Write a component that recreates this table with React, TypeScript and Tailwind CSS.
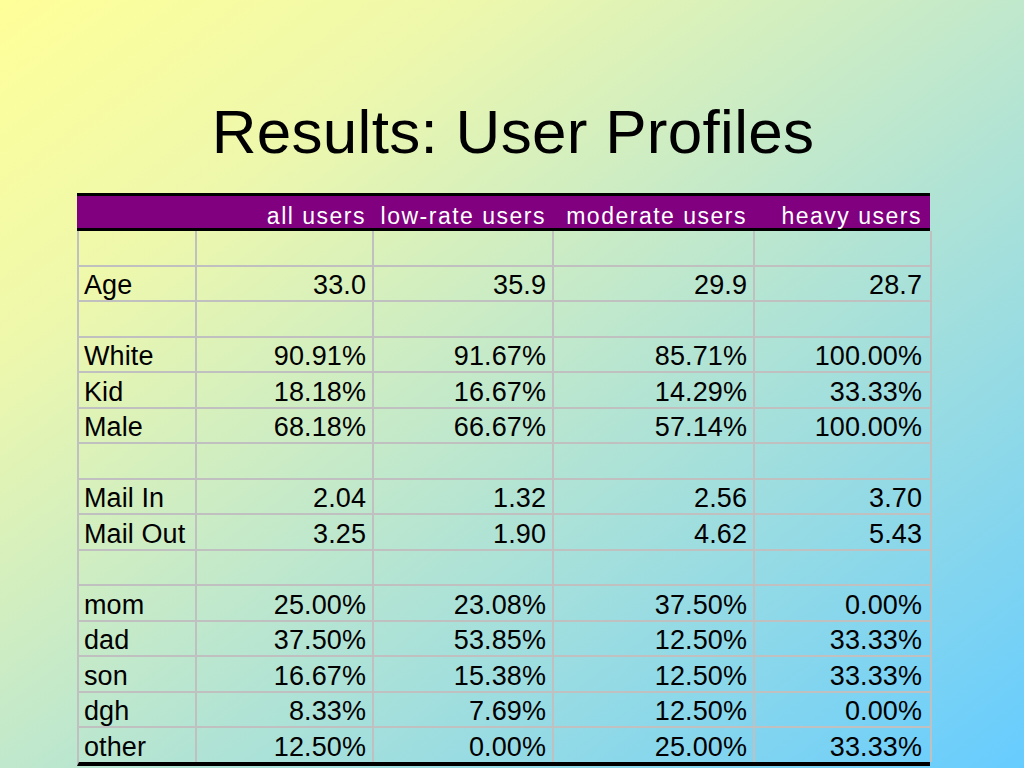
import React from 'react';

const headers = ['', 'all users', 'low-rate users', 'moderate users', 'heavy users'];

// null = spacer row
const rows: (string[] | null)[] = [
  null,
  ['Age', '33.0', '35.9', '29.9', '28.7'],
  null,
  ['White', '90.91%', '91.67%', '85.71%', '100.00%'],
  ['Kid', '18.18%', '16.67%', '14.29%', '33.33%'],
  ['Male', '68.18%', '66.67%', '57.14%', '100.00%'],
  null,
  ['Mail In', '2.04', '1.32', '2.56', '3.70'],
  ['Mail Out', '3.25', '1.90', '4.62', '5.43'],
  null,
  ['mom', '25.00%', '23.08%', '37.50%', '0.00%'],
  ['dad', '37.50%', '53.85%', '12.50%', '33.33%'],
  ['son', '16.67%', '15.38%', '12.50%', '33.33%'],
  ['dgh', '8.33%', '7.69%', '12.50%', '0.00%'],
  ['other', '12.50%', '0.00%', '25.00%', '33.33%'],
];

const cols = 'grid grid-cols-[118px_177px_180px_201px_177px]';

const App: React.FC = () => {
  return (
    <div
      className="w-[1024px] h-[768px] overflow-hidden flex flex-col bg-[linear-gradient(to_bottom_right,#ffff99_0%,#eef8ac_23%,#c0e8cc_50%,#66ccff_100%)] text-black"
      style={{ fontFamily: '"Liberation Sans", Arial, sans-serif' }}
    >
      <h1 className="mt-[101px] self-center text-[62px] leading-[62px] tracking-[0.3px] pl-[2px]">
        Results: User Profiles
      </h1>

      <div className="mt-[30px] w-[853px] ml-[77px]">
        <div className={`${cols} h-[38px] bg-[#800080] border-y-[3px] border-black`}>
          {headers.map((h, i) => (
            <div
              key={i}
              className={`flex items-center justify-end pt-[3px] text-white text-[23px] tracking-[1.5px] whitespace-nowrap ${
                i === 4 ? 'pr-[8px]' : 'pr-[6px]'
              }`}
            >
              {h}
            </div>
          ))}
        </div>

        {rows.map((row, r) => (
          <div
            key={r}
            className={`${cols} h-[35.5px] border-l-2 border-[#c0c0c0] ${
              r === rows.length - 1 ? 'border-b-[4px] border-b-black h-[37.5px]' : ''
            }`}
          >
            {(row ?? ['', '', '', '', '']).map((cell, c) => (
              <div
                key={c}
                className={`flex items-center pt-[5px] text-[27px] leading-none tracking-[0.1px] whitespace-nowrap border-r-2 border-[#c0c0c0] ${
                  r === rows.length - 1 ? '' : 'border-b-2'
                } ${
                  c === 0
                    ? 'justify-start pl-[7px] -ml-[2px]'
                    : c === 4
                      ? 'justify-end pr-[8px]'
                      : 'justify-end pr-[6px]'
                }`}
              >
                {cell}
              </div>
            ))}
          </div>
        ))}
      </div>
    </div>
  );
};

export default App;
